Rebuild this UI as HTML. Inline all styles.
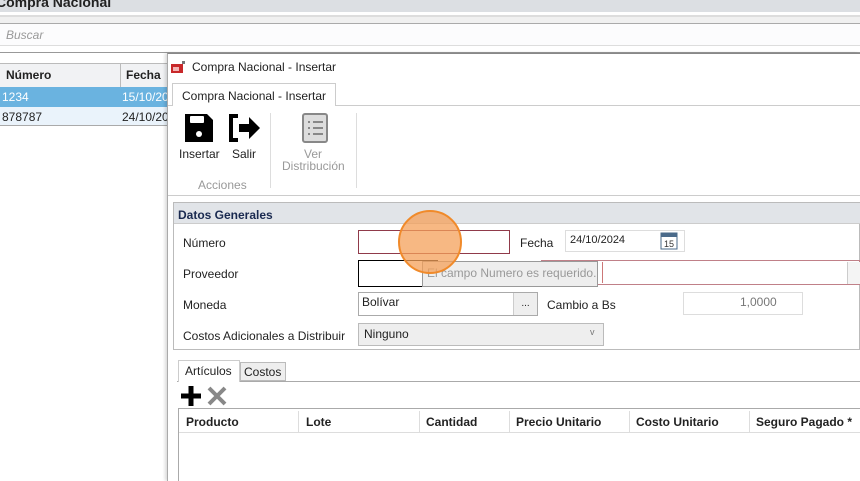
<!DOCTYPE html>
<html><head><meta charset="utf-8"><style>
*{margin:0;padding:0;box-sizing:border-box}
body{width:860px;height:481px;overflow:hidden;background:#fff;font-family:"Liberation Sans",sans-serif;font-size:12px;color:#222;position:relative}
.a{position:absolute}
.b{font-weight:bold}
</style></head><body>
<div class="a" style="left:0;top:0;width:860px;height:12px;background:#dcdfe3"></div>
<div class="a b" style="left:-4px;top:-6px;font-size:14px;color:#222">Compra Nacional</div>
<div class="a" style="left:0;top:15px;width:860px;height:8px;background:#f0f0f0;border-top:2px solid #ddd"></div>
<div class="a" style="left:0;top:23px;width:860px;height:23px;border-top:1px solid #aaa;background:#fcfcfd;border-bottom:1px solid #ddd"></div>
<div class="a" style="left:6px;top:28px;font-style:italic;color:#999;font-size:12px">Buscar</div>
<div class="a" style="left:0;top:52px;width:860px;height:1px;background:#999"></div>
<div class="a" style="left:0;top:63px;width:168px;height:24px;background:#f1f2f4;border-top:1px solid #bbb"></div>
<div class="a" style="left:120px;top:63px;width:1px;height:63px;background:#bbb"></div>
<div class="a b" style="left:6px;top:68px">Número</div>
<div class="a b" style="left:126px;top:68px">Fecha</div>
<div class="a" style="left:0;top:87px;width:168px;height:20px;background:#6ab3e0"></div>
<div class="a" style="left:2px;top:90px;color:#fff">1234</div>
<div class="a" style="left:122px;top:90px;color:#fff">15/10/20</div>
<div class="a" style="left:0;top:107px;width:168px;height:19px;background:#eaf3fb;border-bottom:1px solid #aaa"></div>
<div class="a" style="left:2px;top:110px">878787</div>
<div class="a" style="left:122px;top:110px">24/10/20</div>
<div class="a" style="left:167px;top:53px;width:693px;height:428px;background:#fff;border-left:1px solid #aaa;border-top:1px solid #888;box-shadow:-2px 0 3px rgba(0,0,0,.15)"></div>
<svg class="a" style="left:171px;top:61px" width="14" height="13"><rect x="0" y="3" width="12" height="9" fill="#c8282a"/><rect x="2" y="6" width="6" height="4" fill="#f3b5b5"/><rect x="11" y="0" width="3" height="3" fill="#777"/></svg>
<div class="a" style="left:192px;top:60px;font-size:12px">Compra Nacional - Insertar</div>
<div class="a" style="left:168px;top:105px;width:692px;height:1px;background:#ccc"></div>
<div class="a" style="left:172px;top:83px;width:164px;height:23px;background:#fff;border:1px solid #ccc;border-bottom:none"></div>
<div class="a" style="left:182px;top:89px">Compra Nacional - Insertar</div>
<svg class="a" style="left:183px;top:112px" width="32" height="32"><path d="M2 2h22l6 6v22H2z" fill="#000"/><rect x="7" y="4" width="14" height="7" fill="#fff" rx="1"/><circle cx="16" cy="22" r="3" fill="#fff"/></svg>
<svg class="a" style="left:227px;top:114px" width="34" height="28"><path d="M11 2H4v24h7" stroke="#000" stroke-width="4" fill="none"/><path d="M12 10h10V3l11 11-11 11v-7H12z" fill="#000"/></svg>
<div class="a" style="left:179px;top:147px">Insertar</div>
<div class="a" style="left:232px;top:147px">Salir</div>
<div class="a" style="left:198px;top:178px;color:#999">Acciones</div>
<div class="a" style="left:270px;top:113px;width:1px;height:75px;background:#ddd"></div>
<svg class="a" style="left:301px;top:112px" width="28" height="32"><rect x="2" y="2" width="24" height="28" rx="2" fill="#ddd" stroke="#888" stroke-width="2"/><g stroke="#888" stroke-width="2"><path d="M7 10h2M12 10h10M7 16h2M12 16h10M7 22h2M12 22h10"/></g></svg>
<div class="a" style="left:304px;top:147px;color:#999">Ver</div>
<div class="a" style="left:282px;top:159px;color:#999">Distribución</div>
<div class="a" style="left:356px;top:113px;width:1px;height:75px;background:#ddd"></div>
<div class="a" style="left:168px;top:195px;width:692px;height:1px;background:#ccc"></div>
<div class="a" style="left:173px;top:202px;width:687px;height:148px;border:1px solid #bbb;background:#fff"></div>
<div class="a" style="left:174px;top:203px;width:686px;height:21px;background:#e1e4e8;border-bottom:1px solid #ccc"></div>
<div class="a b" style="left:178px;top:208px;color:#1a2a50">Datos Generales</div>
<div class="a" style="left:183px;top:236px">Número</div>
<div class="a" style="left:358px;top:230px;width:152px;height:24px;border:1px solid #903a4a"></div>
<div class="a" style="left:520px;top:236px">Fecha</div>
<div class="a" style="left:565px;top:230px;width:120px;height:22px;border:1px solid #ddd"></div>
<div class="a" style="left:570px;top:234px;font-size:11px">24/10/2024</div>
<svg class="a" style="left:660px;top:232px" width="18" height="18"><rect x="1" y="1" width="16" height="16" fill="#fff" stroke="#4a6a8a"/><rect x="1" y="1" width="16" height="4" fill="#4a6a8a"/><text x="4" y="15" font-size="9" font-family="Liberation Sans" fill="#333">15</text></svg>
<div class="a" style="left:183px;top:267px">Proveedor</div>
<div class="a" style="left:358px;top:260px;width:80px;height:27px;border:1px solid #000"></div>
<div class="a" style="left:541px;top:260px;width:319px;height:25px;border:1px solid #c08088;background:#fff"></div>
<div class="a" style="left:602px;top:262px;width:245px;height:21px;border-left:1px solid #c77"></div>
<div class="a" style="left:422px;top:261px;width:176px;height:26px;border:1px solid #999;background:#eeeeee"></div>
<div class="a" style="left:427px;top:266px;color:#999">El campo Numero es requerido.</div>
<div class="a" style="left:847px;top:262px;width:13px;height:22px;border-left:1px solid #ccc;background:#f4f4f4"></div>
<div class="a" style="left:183px;top:298px">Moneda</div>
<div class="a" style="left:358px;top:292px;width:180px;height:24px;border:1px solid #aaa"></div>
<div class="a" style="left:513px;top:293px;width:24px;height:22px;background:#eee;border-left:1px solid #ccc;text-align:center;font-size:10px;line-height:22px">...</div>
<div class="a" style="left:362px;top:295px">Bolívar</div>
<div class="a" style="left:547px;top:298px">Cambio a Bs</div>
<div class="a" style="left:683px;top:292px;width:120px;height:23px;border:1px solid #ddd"></div>
<div class="a" style="left:740px;top:295px;color:#777">1,0000</div>
<div class="a" style="left:183px;top:329px">Costos Adicionales a Distribuir</div>
<div class="a" style="left:358px;top:323px;width:246px;height:23px;border:1px solid #bbb;background:#eee"></div>
<div class="a" style="left:364px;top:327px">Ninguno</div>
<div class="a" style="left:590px;top:327px;font-size:9px;color:#777">v</div>
<div class="a" style="left:398px;top:210px;width:64px;height:64px;border-radius:50%;background:rgba(244,160,90,.75);border:2px solid #f08a2a"></div>
<div class="a" style="left:177px;top:381px;width:683px;height:1px;background:#aaa"></div>
<div class="a" style="left:178px;top:360px;width:62px;height:22px;background:#fff;border:1px solid #ccc;border-bottom:none"></div>
<div class="a" style="left:185px;top:364px">Artículos</div>
<div class="a" style="left:240px;top:362px;width:46px;height:19px;background:#eee;border:1px solid #bbb"></div>
<div class="a" style="left:244px;top:365px">Costos</div>
<svg class="a" style="left:180px;top:385px" width="48" height="22"><path d="M11 1v20M1 11h20" stroke="#000" stroke-width="5"/><path d="M29 3l16 16M45 3L29 19" stroke="#888" stroke-width="4"/></svg>
<div class="a" style="left:178px;top:408px;width:682px;height:73px;border-left:1px solid #aaa;border-top:1px solid #aaa"></div>
<div class="a" style="left:179px;top:432px;width:681px;height:1px;background:#ddd"></div>
<div class="a b" style="left:186px;top:415px">Producto</div>
<div class="a" style="left:298px;top:411px;width:1px;height:21px;background:#ddd"></div>
<div class="a b" style="left:306px;top:415px">Lote</div>
<div class="a" style="left:419px;top:411px;width:1px;height:21px;background:#ddd"></div>
<div class="a b" style="left:426px;top:415px">Cantidad</div>
<div class="a" style="left:509px;top:411px;width:1px;height:21px;background:#ddd"></div>
<div class="a b" style="left:516px;top:415px">Precio Unitario</div>
<div class="a" style="left:629px;top:411px;width:1px;height:21px;background:#ddd"></div>
<div class="a b" style="left:636px;top:415px">Costo Unitario</div>
<div class="a" style="left:749px;top:411px;width:1px;height:21px;background:#ddd"></div>
<div class="a b" style="left:756px;top:415px">Seguro Pagado *</div>
</body></html>
